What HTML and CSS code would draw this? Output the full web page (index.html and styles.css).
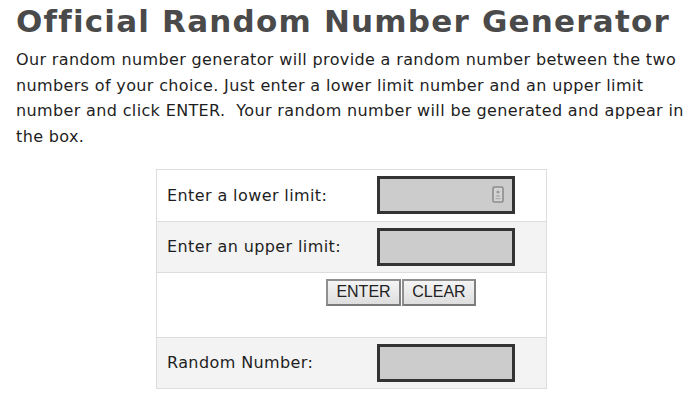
FILE: index.html
```html
<!DOCTYPE html>
<html lang="en">
<head>
<meta charset="utf-8">
<title>Official Random Number Generator</title>
<link rel="stylesheet" href="styles.css">
</head>
<body>
<main class="page">
  <h1 class="title">Official Random Number Generator</h1>
  <p class="intro">Our random number generator will provide a random number between the two numbers of your choice. Just enter a lower limit number and an upper limit number and click ENTER.&nbsp; Your random number will be generated and appear in the box.</p>
  <table class="rng">
    <tr class="row row-a">
      <td class="label">Enter a lower limit:</td>
      <td class="field">
        <span class="box-wrap">
          <input class="box" type="text" aria-label="lower limit">
          <svg class="autofill" width="12" height="17" viewBox="0 0 12 17" aria-hidden="true">
            <rect x="1" y="1" width="10" height="15" rx="1.5" fill="#d4d4d4" stroke="#8c8c8c" stroke-width="1.6"/>
            <circle cx="6" cy="6" r="1.6" fill="#9a9a9a"/>
            <path d="M3.5 10.5 Q6 7.8 8.5 10.5 Z" fill="#9a9a9a"/>
            <rect x="3.5" y="12" width="5" height="1.2" fill="#a8a8a8"/>
          </svg>
        </span>
      </td>
    </tr>
    <tr class="row row-b">
      <td class="label">Enter an upper limit:</td>
      <td class="field"><input class="box" type="text" aria-label="upper limit"></td>
    </tr>
    <tr class="row row-c">
      <td class="actions" colspan="2">
        <button class="btn" type="button">ENTER</button><button class="btn" type="button">CLEAR</button>
      </td>
    </tr>
    <tr class="row row-d">
      <td class="label">Random Number:</td>
      <td class="field"><input class="box" type="text" aria-label="random number" readonly></td>
    </tr>
  </table>
</main>
</body>
</html>
```
FILE: styles.css
```css
html, body {
  margin: 0;
  padding: 0;
  background: #ffffff;
}

.page {
  padding: 0 6px 0 16px;
  font-family: "DejaVu Sans", sans-serif;
  color: #1e1e1e;
}

.title {
  margin: 0;
  padding-top: 3px;
  font-size: 31px;
  line-height: 36px;
  font-weight: bold;
  letter-spacing: 1.2px;
  color: #4a4a4a;
}

.intro {
  margin: 8px 0 0 0;
  font-size: 16px;
  line-height: 25.7px;
  letter-spacing: 0.36px;
}

.rng {
  margin: 19px 0 0 140px;
  border-collapse: collapse;
  border: 1px solid #dddddd;
  width: 391px;
  font-size: 16px;
  letter-spacing: 0.4px;
}

.row td {
  border-top: 1px solid #dddddd;
  padding: 0 10px;
  vertical-align: middle;
}

.row-a { height: 52px; background: #ffffff; }
.row-b { height: 51px; background: #f3f3f3; }
.row-c { height: 65px; background: #ffffff; }
.row-d { height: 51px; background: #f3f3f3; }

.label {
  width: 190px;
  color: #1e1e1e;
  padding-top: 2px;
}

.field {
  padding-top: 1px;
}

.box-wrap {
  position: relative;
  display: inline-block;
  vertical-align: middle;
}

.box {
  display: block;
  box-sizing: border-box;
  width: 138px;
  height: 38px;
  margin: 0;
  border: 3px solid #333333;
  background: #cccccc;
  font-size: 16px;
  padding: 0 6px;
  outline: none;
}

.autofill {
  position: absolute;
  right: 11px;
  top: 10px;
}

.actions {
  vertical-align: top !important;
  padding: 6px 0 0 169px !important;
}

.btn {
  box-sizing: border-box;
  height: 27px;
  margin: 0 1px 0 0;
  padding: 0 4px;
  font-family: "Liberation Sans", Arial, sans-serif;
  font-size: 16px;
  letter-spacing: 0;
  color: #222222;
  background: linear-gradient(#f4f4f4, #dedede);
  border: 2px solid #8f8f8f;
  border-right-color: #808080;
  border-bottom-color: #7a7a7a;
  vertical-align: top;
}

.btn:first-child {
  width: 75px;
}

.btn:last-child {
  width: 74px;
}
```
